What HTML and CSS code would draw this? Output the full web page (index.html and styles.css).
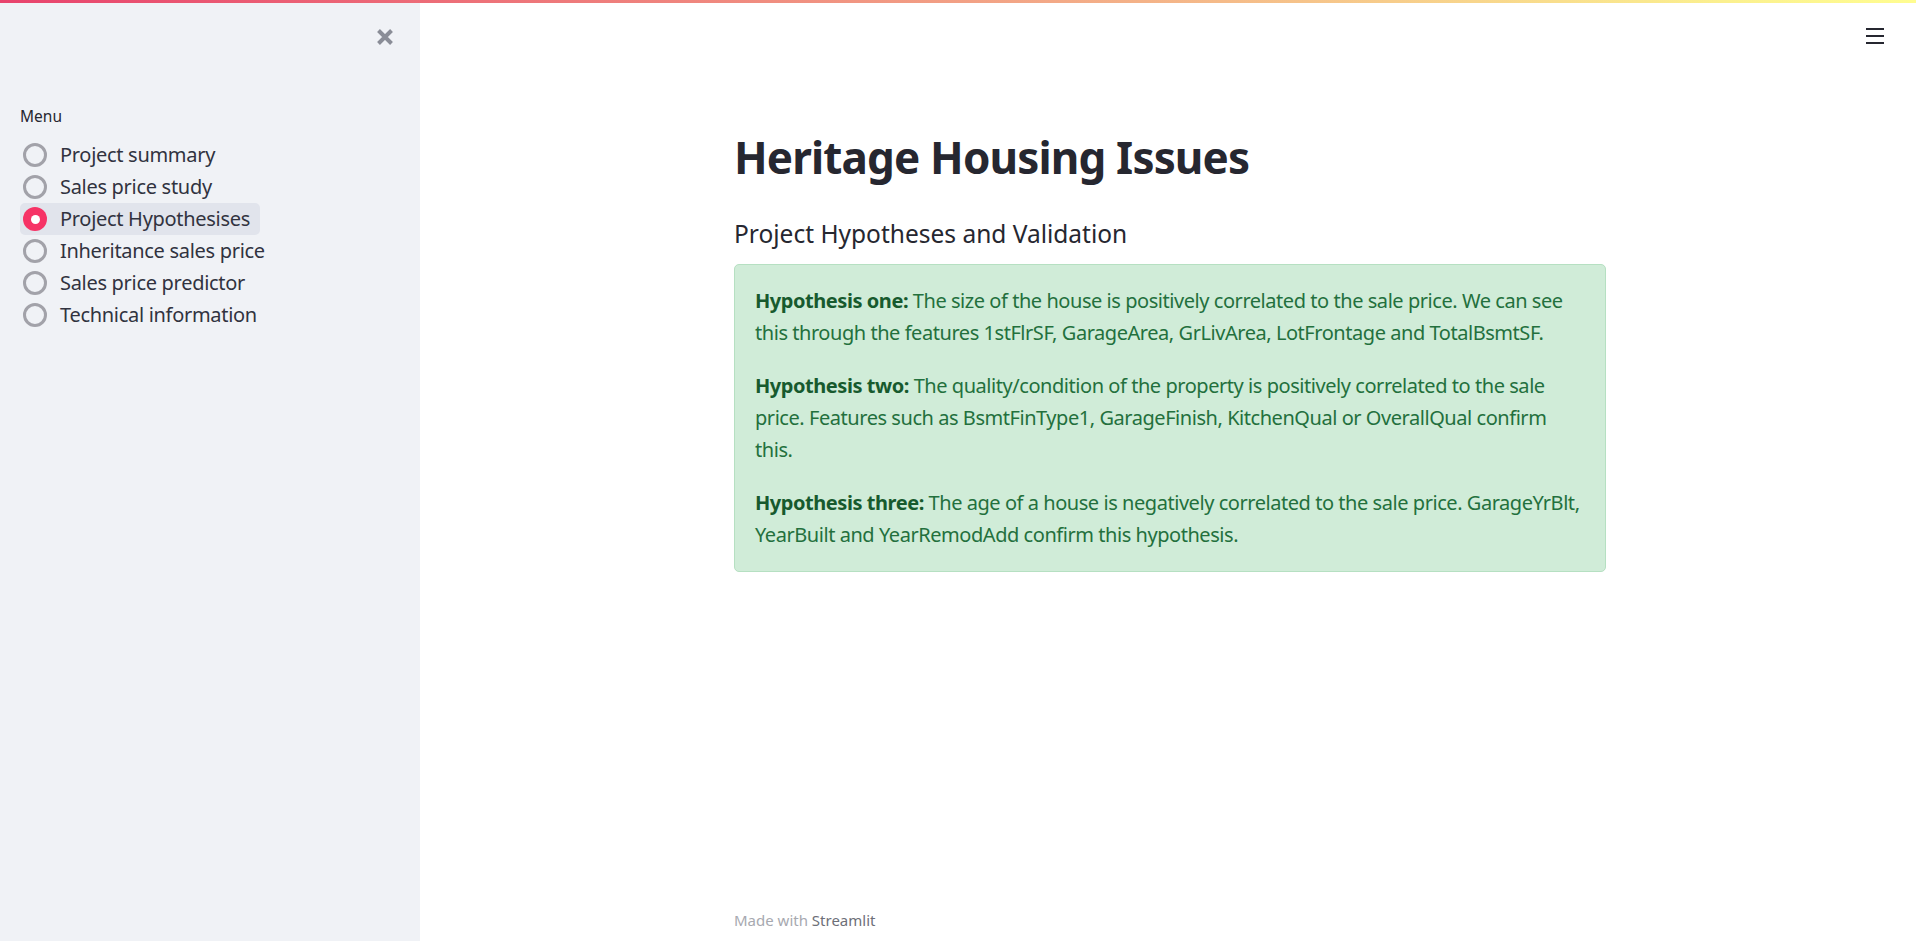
FILE: index.html
```html
<!DOCTYPE html>
<html lang="en">
<head>
<meta charset="utf-8">
<title>Heritage Housing Issues</title>
<link rel="stylesheet" href="styles.css">
</head>
<body>
<div class="decor"></div>
<div class="app">
  <aside class="sidebar">
    <div class="sb-top">
      <button class="close" aria-label="Close sidebar">
        <svg width="18" height="18" viewBox="0 0 18 18"><path d="M2.5 2.5 L15.5 15.5 M15.5 2.5 L2.5 15.5" stroke="#8a8d97" stroke-width="4" stroke-linecap="butt"/></svg>
      </button>
    </div>
    <div class="menu-label">Menu</div>
    <div class="radio-group">
      <label class="radio"><span class="ring"></span><span class="rlabel">Project summary</span></label>
      <label class="radio"><span class="ring"></span><span class="rlabel">Sales price study</span></label>
      <label class="radio selected"><span class="ring"></span><span class="rlabel">Project Hypothesises</span></label>
      <label class="radio"><span class="ring"></span><span class="rlabel">Inheritance sales price</span></label>
      <label class="radio"><span class="ring"></span><span class="rlabel">Sales price predictor</span></label>
      <label class="radio"><span class="ring"></span><span class="rlabel">Technical information</span></label>
    </div>
  </aside>
  <main class="main">
    <div class="topbar">
      <svg width="18" height="16" viewBox="0 0 18 16"><rect x="0" y="0" width="18" height="2" fill="#262730"/><rect x="0" y="7" width="18" height="2" fill="#262730"/><rect x="0" y="14" width="18" height="2" fill="#262730"/></svg>
    </div>
    <div class="block">
      <h1 class="title">Heritage Housing Issues</h1>
      <h3 class="subtitle">Project Hypotheses and Validation</h3>
      <div class="alert">
        <p><strong>Hypothesis one:</strong> The size of the house is positively correlated to the sale price. We can see this through the features 1stFlrSF, GarageArea, GrLivArea, LotFrontage and TotalBsmtSF.</p>
        <p><strong>Hypothesis two:</strong> The quality/condition of the property is positively correlated to the sale price. Features such as BsmtFinType1, GarageFinish, KitchenQual or OverallQual confirm this.</p>
        <p><strong>Hypothesis three:</strong> The age of a house is negatively correlated to the sale price. GarageYrBlt, YearBuilt and YearRemodAdd confirm this hypothesis.</p>
      </div>
    </div>
    <footer class="footer">Made with <span class="brand">Streamlit</span></footer>
  </main>
</div>
</body>
</html>
```

FILE: styles.css
```css
* { box-sizing: border-box; }
html, body { margin: 0; padding: 0; height: 100%; }
body {
  font-family: "Noto Sans", "DejaVu Sans", sans-serif;
  color: #262730;
  background: #ffffff;
  display: flex;
  flex-direction: column;
  overflow: hidden;
}
.decor {
  height: 3px;
  flex: 0 0 3px;
  background: linear-gradient(90deg, #e8436d, #f3a987 55%, #fbf08f 90%, #fffd90);
}
.app {
  flex: 1;
  display: flex;
  min-height: 0;
}
.sidebar {
  width: 420px;
  flex: 0 0 420px;
  background: #f0f2f6;
  padding: 0 20px;
}
.sb-top {
  display: flex;
  justify-content: flex-end;
  padding-top: 25px;
  padding-right: 6px;
}
.close {
  border: 0;
  background: none;
  padding: 0;
  width: 18px;
  height: 18px;
  display: block;
}
.close svg { display: block; }
.menu-label {
  margin-top: 60px;
  font-size: 15.5px;
  line-height: 20px;
  height: 20px;
  margin-bottom: 13px;
}
.radio-group {
  display: flex;
  flex-direction: column;
  align-items: flex-start;
}
.radio {
  display: flex;
  align-items: center;
  height: 32px;
  padding: 0 10px 0 3px;
  border-radius: 5px;
  font-size: 20px;
  letter-spacing: -0.3px;
  color: #31333f;
}
.radio.selected { background: #e1e4ec; }
.ring {
  width: 24px;
  height: 24px;
  border-radius: 50%;
  border: 3px solid #a2a2a9;
  margin-right: 13px;
  flex: 0 0 24px;
  display: flex;
  align-items: center;
  justify-content: center;
}
.radio.selected .ring {
  border: 0;
  background: #f63366;
}
.radio.selected .ring::after {
  content: "";
  width: 9px;
  height: 9px;
  border-radius: 50%;
  background: #ffffff;
}
.rlabel { line-height: 32px; white-space: nowrap; }
.main {
  flex: 1;
  display: flex;
  flex-direction: column;
  padding-left: 4px;
  min-width: 0;
}
.topbar {
  display: flex;
  justify-content: flex-end;
  padding-top: 25px;
  padding-right: 32px;
}
.topbar svg { display: block; }
.block {
  width: 872px;
  margin: 0 auto;
}
.title {
  margin: 86px 0 0;
  font-size: 44px;
  line-height: 54px;
  font-weight: 700;
  color: #262730;
  letter-spacing: -0.85px;
}
.subtitle {
  margin: 35px 0 0;
  font-size: 24.5px;
  line-height: 29px;
  font-weight: 400;
  color: #262730;
}
.alert {
  margin-top: 16px;
  background: #d0ecd8;
  border: 1px solid #b6e0c2;
  border-radius: 5px;
  padding: 20px;
  color: #23703d;
  font-size: 20px;
  line-height: 32px;
  letter-spacing: -0.45px;
}
.alert p { margin: 0 0 21px; }
.alert p:last-child { margin-bottom: 0; }
.alert strong { font-weight: 700; color: #175a2e; }
.footer {
  margin-top: auto;
  width: 872px;
  margin-left: auto;
  margin-right: auto;
  padding-bottom: 11px;
  font-size: 15px;
  line-height: 20px;
  color: #a7a9b0;
}
.brand { color: #6d6f78; }
```
